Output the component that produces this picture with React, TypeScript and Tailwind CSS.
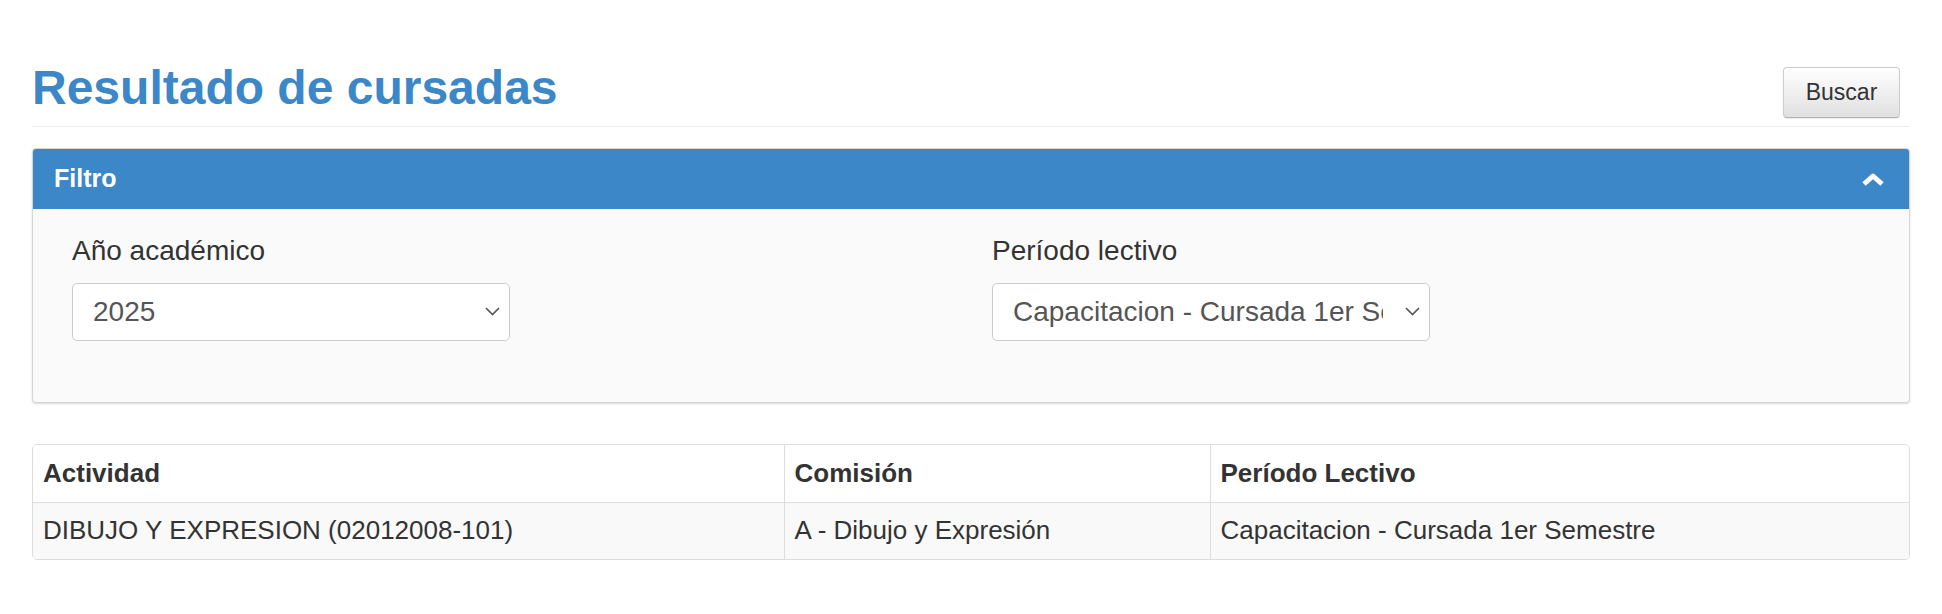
import { useState } from 'react';

const FONT = { fontFamily: '"Liberation Sans", Arial, Helvetica, sans-serif' };

interface FilterSelectProps {
  label: string;
  value: string;
  options: string[];
  onChange: (value: string) => void;
}

const FilterSelect = ({ label, value, options, onChange }: FilterSelectProps) => {
  return (
    <div>
      <label className="block text-[28px] leading-[32px] text-[#333] mb-[16px]">{label}</label>
      <div className="relative w-[438px]">
        <select
          value={value}
          onChange={(e) => onChange(e.target.value)}
          className="appearance-none w-full h-[58px] pl-[20px] pr-[46px] bg-white border border-[#ccc] rounded-[5px] text-[28px] text-[#555] outline-none overflow-hidden"
        >
          {options.map((opt) => (
            <option key={opt} value={opt}>
              {opt}
            </option>
          ))}
        </select>
        <svg
          className="absolute right-[10px] top-[24px] pointer-events-none"
          width="15"
          height="9"
          viewBox="0 0 15 9"
          fill="none"
        >
          <polyline points="1,1 7.5,7.5 14,1" stroke="#555" strokeWidth="1.6" />
        </svg>
      </div>
    </div>
  );
};

const ROWS = [
  {
    actividad: 'DIBUJO Y EXPRESION (02012008-101)',
    comision: 'A - Dibujo y Expresión',
    periodo: 'Capacitacion - Cursada 1er Semestre',
  },
];

const App = () => {
  const [anio, setAnio] = useState('2025');
  const [periodo, setPeriodo] = useState('Capacitacion - Cursada 1er Semestre');
  const [open, setOpen] = useState(true);

  return (
    <div className="min-h-screen bg-white px-[32px] text-[#333]" style={FONT}>
      {/* encabezado */}
      <div className="flex justify-between items-start pt-[61px] pb-[8px] border-b border-[#eee]">
        <h1 className="text-[48px] leading-[53px] font-bold text-[#3b87c7]">Resultado de cursadas</h1>
        <button className="mt-[6px] mr-[10px] h-[51px] w-[117px] rounded-[4px] border border-[#ccc] border-b-[#b3b3b3] bg-linear-to-b from-white to-[#e0e0e0] text-[23px] text-[#333] shadow-[0_1px_1px_rgba(0,0,0,0.08)]">
          Buscar
        </button>
      </div>

      {/* filtro */}
      <div className="mt-[21px] border border-[#d6d6d6] rounded-[4px] bg-[#fafafa] shadow-[0_1px_2px_rgba(0,0,0,0.15)]">
        <div
          className="flex items-center justify-between h-[60px] pl-[21px] pr-[24px] bg-[#3b87c7] rounded-t-[3px] cursor-pointer"
          onClick={() => setOpen(!open)}
        >
          <span className="text-[25px] font-bold text-white">Filtro</span>
          <svg width="24" height="14" viewBox="0 0 24 14" fill="none">
            <polyline
              points={open ? '3,12 12,4 21,12' : '3,3 12,11 21,3'}
              stroke="white"
              strokeWidth="5"
              strokeLinejoin="round"
            />
          </svg>
        </div>
        {open && (
          <div className="grid grid-cols-2 gap-x-[42px] px-[39px] pt-[26px] pb-[61px]">
            <FilterSelect label="Año académico" value={anio} options={['2025', '2024', '2023']} onChange={setAnio} />
            <FilterSelect
              label="Período lectivo"
              value={periodo}
              options={['Capacitacion - Cursada 1er Semestre', 'Capacitacion - Cursada 2do Semestre']}
              onChange={setPeriodo}
            />
          </div>
        )}
      </div>

      {/* resultados */}
      <div className="mt-[41px] border border-[#ddd] rounded-[5px] overflow-hidden">
        <table className="w-full table-fixed border-collapse text-[26px]">
          <colgroup>
            <col className="w-[751px]" />
            <col className="w-[426px]" />
            <col />
          </colgroup>
          <thead>
            <tr className="h-[57px] bg-white">
              <th className="px-[10px] text-left font-bold border-r border-[#ddd]">Actividad</th>
              <th className="px-[10px] text-left font-bold border-r border-[#ddd]">Comisión</th>
              <th className="px-[10px] text-left font-bold">Período Lectivo</th>
            </tr>
          </thead>
          <tbody>
            {ROWS.map((row) => (
              <tr key={row.actividad} className="h-[57px] bg-[#f9f9f9] border-t border-[#ddd]">
                <td className="px-[10px] border-r border-[#ddd]">{row.actividad}</td>
                <td className="px-[10px] border-r border-[#ddd]">{row.comision}</td>
                <td className="px-[10px]">{row.periodo}</td>
              </tr>
            ))}
          </tbody>
        </table>
      </div>
    </div>
  );
};

export default App;
